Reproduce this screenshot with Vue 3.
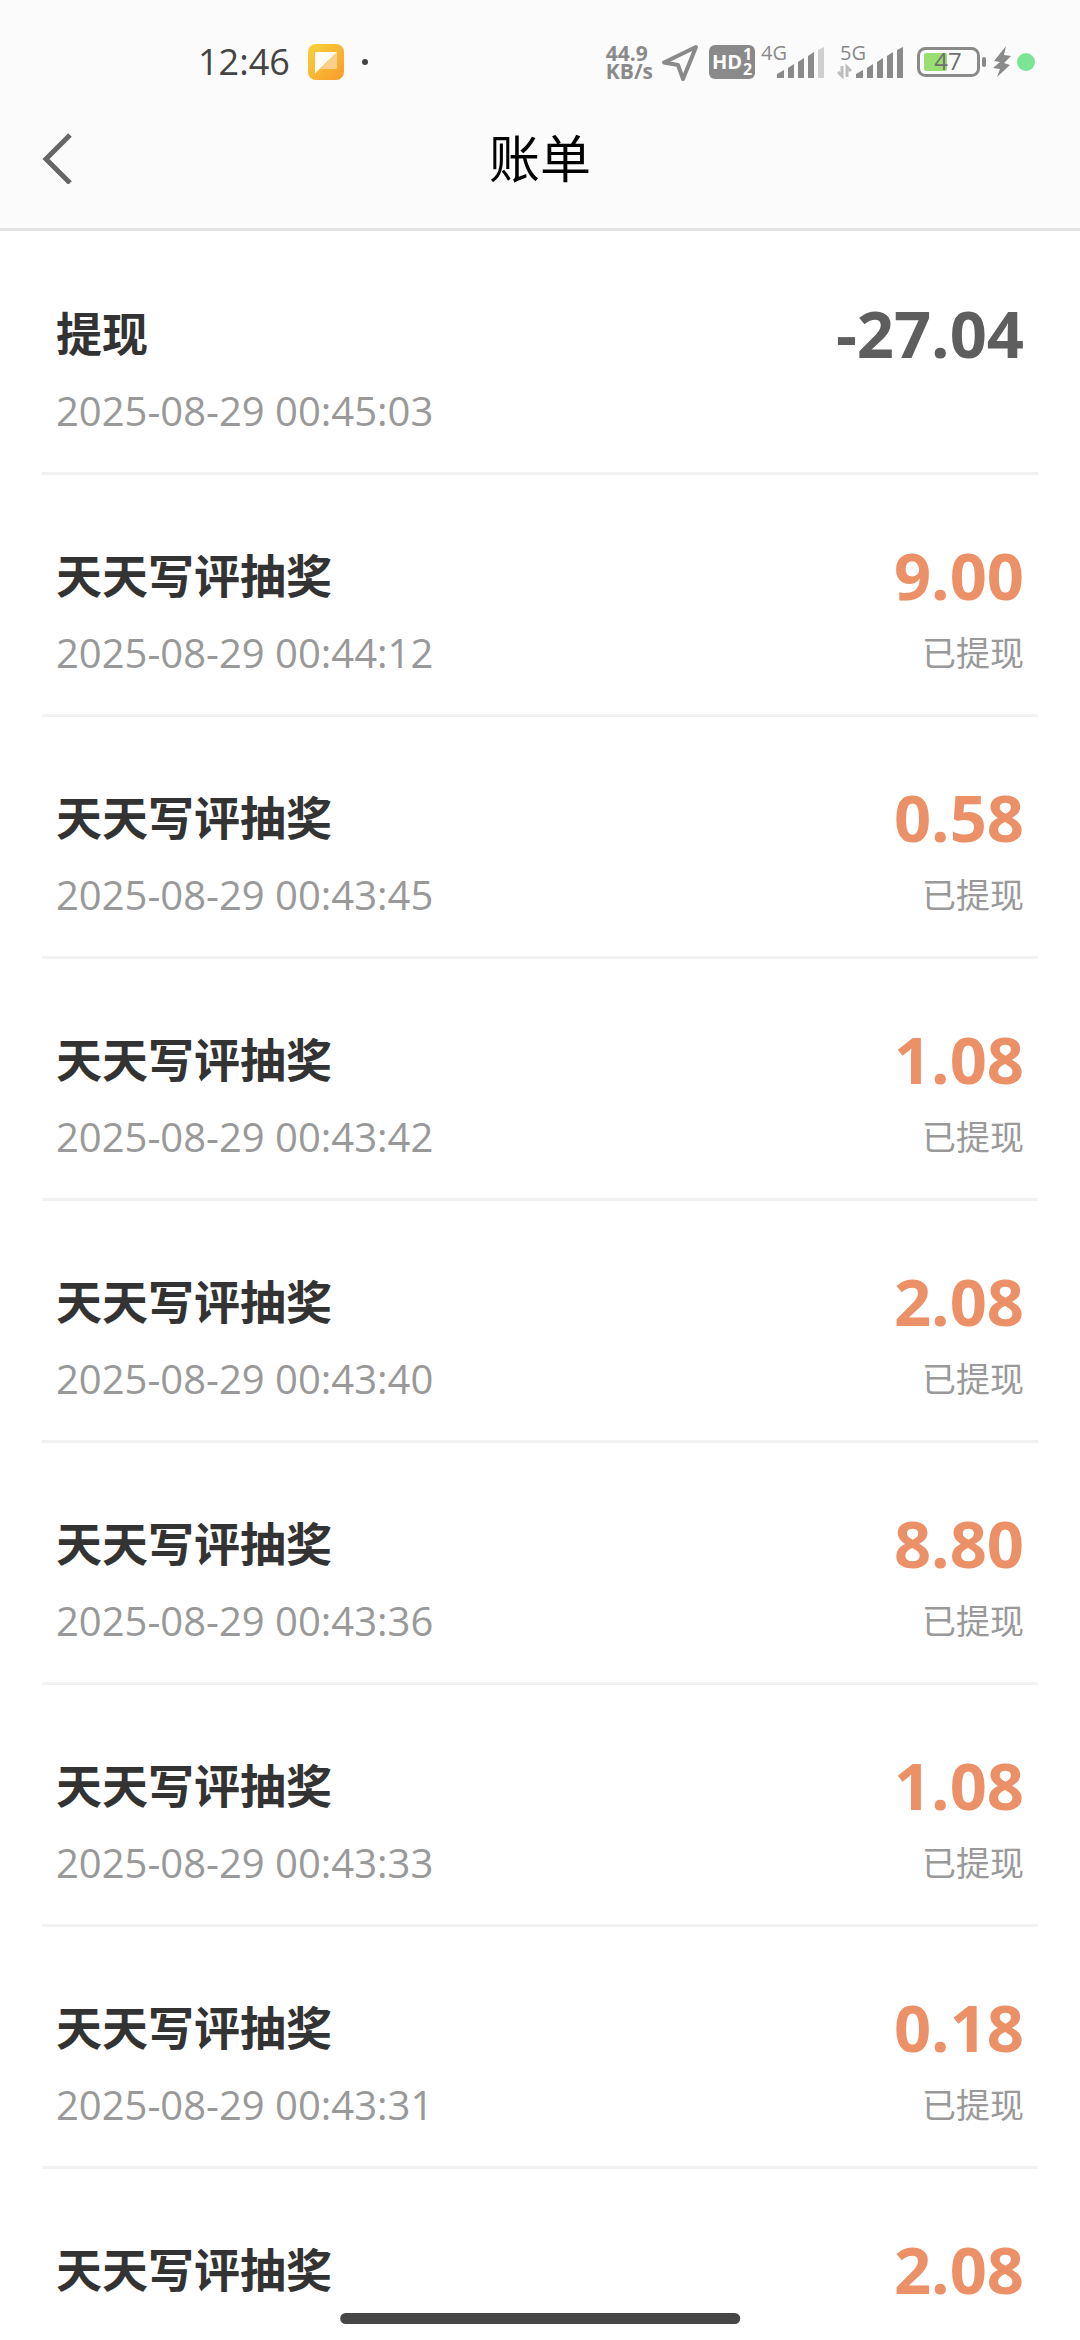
<script setup>
const bills = [
  { title: '提现', time: '2025-08-29 00:45:03', amount: '-27.04', out: true },
  { title: '天天写评抽奖', time: '2025-08-29 00:44:12', amount: '9.00', status: '已提现' },
  { title: '天天写评抽奖', time: '2025-08-29 00:43:45', amount: '0.58', status: '已提现' },
  { title: '天天写评抽奖', time: '2025-08-29 00:43:42', amount: '1.08', status: '已提现' },
  { title: '天天写评抽奖', time: '2025-08-29 00:43:40', amount: '2.08', status: '已提现' },
  { title: '天天写评抽奖', time: '2025-08-29 00:43:36', amount: '8.80', status: '已提现' },
  { title: '天天写评抽奖', time: '2025-08-29 00:43:33', amount: '1.08', status: '已提现' },
  { title: '天天写评抽奖', time: '2025-08-29 00:43:31', amount: '0.18', status: '已提现' },
  { title: '天天写评抽奖', amount: '2.08' },
]
</script>

<template>
  <div class="screen">
    <header class="top">
      <div class="status-bar">
        <div class="status-left">
          <span class="clock">12:46</span>
          <svg class="app-icon" width="36" height="36" viewBox="0 0 36 36" aria-hidden="true">
            <defs>
              <linearGradient id="appFill" x1="0" y1="0" x2="1" y2="1">
                <stop offset="0" stop-color="#f9d33c" />
                <stop offset="1" stop-color="#f99a2b" />
              </linearGradient>
            </defs>
            <rect width="36" height="36" rx="8" fill="url(#appFill)" />
            <path d="M29 8V23.500Q29 25 27.500 25H12.500Z" fill="#fcd08a" />
            <path d="M8.500 8H29L7 29.500V9.500Q7 8 8.500 8Z" fill="#fffdf6" />
          </svg>
          <span class="dot"></span>
        </div>
        <div class="status-right">
          <div class="speed"><span>44.9</span><span>KB/s</span></div>
          <svg class="locate" width="38" height="40" viewBox="0 0 38 40" aria-hidden="true">
            <path d="M35 5L3 20.500L17 23L22 37Z" fill="none" stroke="#8a8a8a" stroke-width="4" stroke-linejoin="round" />
          </svg>
          <svg class="hd" width="46" height="40" viewBox="0 0 46 40">
            <rect y="3" width="46" height="34" rx="6" fill="#8a8a8a" />
            <text x="3" y="27" class="hd-main">HD</text>
            <text x="34" y="18" class="hd-sub">1</text>
            <text x="34" y="33" class="hd-sub">2</text>
          </svg>
          <svg class="net" width="64" height="48" viewBox="0 -4 64 48">
            <text x="0" y="18" class="net-text">4G</text>
            <g fill="#8a8a8a">
              <path d="M16 36V32L23 28V36Z" />
              <path d="M27 36V26L33 22V36Z" />
              <path d="M37 36V20L43 16V36Z" />
              <path d="M47 36V14L53 10V36Z" />
            </g>
            <path d="M57 36V8L63 5V36Z" fill="#cfcfcf" />
          </svg>
          <svg class="net second" width="68" height="48" viewBox="0 -4 68 48">
            <text x="3" y="18" class="net-text">5G</text>
            <path d="M5 24V34L1 30M10 35V25L14 29" fill="none" stroke="#bdbdbd" stroke-width="3" />
            <g fill="#8a8a8a">
              <path d="M19 36V32L26 28V36Z" />
              <path d="M30 36V26L36 22V36Z" />
              <path d="M40 36V20L46 16V36Z" />
              <path d="M50 36V14L56 10V36Z" />
              <path d="M60 36V8L66 5V36Z" />
            </g>
          </svg>
          <svg class="battery" width="70" height="40" viewBox="0 0 70 40">
            <rect x="1.500" y="6.500" width="60" height="27" rx="7" fill="none" stroke="#8a8a8a" stroke-width="3" />
            <rect x="7" y="11" width="23" height="18" rx="2" fill="#9ade72" />
            <rect x="65" y="15" width="4" height="10" rx="2" fill="#8a8a8a" />
            <text x="31" y="28" text-anchor="middle" class="battery-text">47</text>
          </svg>
          <svg class="bolt" width="18" height="40" viewBox="0 0 18 40" aria-hidden="true">
            <path d="M13 4L1 19L7 20L0 26L7 27L4 35L17 23L11 21L18 14L11 13Z" fill="#8a8a8a" />
          </svg>
          <span class="privacy"></span>
        </div>
      </div>
      <nav class="nav">
        <button class="back" type="button" aria-label="返回">
          <svg width="32" height="52" viewBox="0 0 32 52" aria-hidden="true">
            <path d="M30 3L6 27L30 51" fill="none" stroke="#666" stroke-width="5" />
          </svg>
        </button>
        <h1>账单</h1>
      </nav>
    </header>

    <main class="list">
      <article v-for="(bill, i) in bills" :key="i" class="row">
        <div class="info">
          <h2>{{ bill.title }}</h2>
          <time v-if="bill.time">{{ bill.time }}</time>
        </div>
        <div class="money">
          <strong :class="{ out: bill.out }">{{ bill.amount }}</strong>
          <span v-if="bill.status">{{ bill.status }}</span>
        </div>
      </article>
    </main>
    <div class="home-bar"></div>
  </div>
</template>

<style>
body {
  background: #fff;
}
</style>

<style scoped>
.screen {
  position: relative;
  display: flex;
  flex-direction: column;
  height: 100vh;
  overflow: hidden;
  background: #fff;
  font-family: "Open Sans", "Noto Sans CJK SC", sans-serif;
}
.top {
  flex: none;
  background: #fbfbfb;
  border-bottom: 3px solid #e3e3e3;
}
.status-bar {
  display: flex;
  justify-content: space-between;
  padding: 42px 45px 6px 198px;
}
.status-left,
.status-right {
  display: flex;
  align-items: center;
  height: 40px;
}
.clock {
  font-size: 36px;
  line-height: 40px;
  color: #444;
}
.app-icon {
  margin-left: 18px;
}
.dot {
  width: 6px;
  height: 6px;
  margin-left: 18px;
  border-radius: 50%;
  background: #444;
}
.speed {
  display: flex;
  flex-direction: column;
  font-size: 21px;
  line-height: 18px;
  font-weight: 700;
  color: #8a8a8a;
}
.locate {
  margin-left: 8px;
}
.hd {
  margin-left: 10px;
}
.net {
  margin-left: 6px;
}
.second {
  margin-left: 12px;
}
.battery {
  margin-left: 12px;
}
.bolt {
  margin-left: 6px;
}
.privacy {
  width: 18px;
  height: 18px;
  margin-left: 6px;
  border-radius: 50%;
  background: #7be495;
}
.hd-main {
  font-size: 20px;
  font-weight: 700;
  fill: #fff;
}
.hd-sub {
  font-size: 16px;
  font-weight: 700;
  fill: #fff;
}
.net-text {
  font-size: 20px;
  fill: #8a8a8a;
}
.battery-text {
  font-size: 24px;
  fill: #707070;
}
.nav {
  display: grid;
  grid-template-columns: 1fr auto 1fr;
  align-items: center;
  height: 140px;
  padding: 0 40px;
}
.back {
  display: flex;
  justify-self: start;
  padding: 0;
  border: 0;
  background: none;
}
h1 {
  margin: 0;
  font-size: 51px;
  line-height: 60px;
  font-weight: 400;
  color: #000;
}
.list {
  flex: 1;
  min-height: 0;
  padding: 2px 42px 0;
  overflow: hidden;
}
.row {
  display: flex;
  justify-content: space-between;
  box-sizing: border-box;
  height: 242px;
  padding: 70px 14px 0;
  border-bottom: 3px solid #f2f2f2;
}
.info,
.money {
  display: flex;
  flex-direction: column;
  gap: 18px;
}
.money {
  align-items: flex-end;
}
h2 {
  margin: 0;
  font-size: 46px;
  line-height: 60px;
  font-weight: 600;
  color: #333;
}
time {
  font-size: 40px;
  line-height: 60px;
  color: #999;
}
.money strong {
  font-size: 65px;
  line-height: 60px;
  font-weight: 700;
  color: #eb9067;
}
.money strong.out {
  color: #5e5e5e;
}
.money span {
  font-size: 34px;
  line-height: 60px;
  color: #999;
}
.home-bar {
  position: absolute;
  bottom: 16px;
  left: 50%;
  width: 37%;
  height: 11px;
  border-radius: 6px;
  background: #464646;
  transform: translateX(-50%);
}
</style>
